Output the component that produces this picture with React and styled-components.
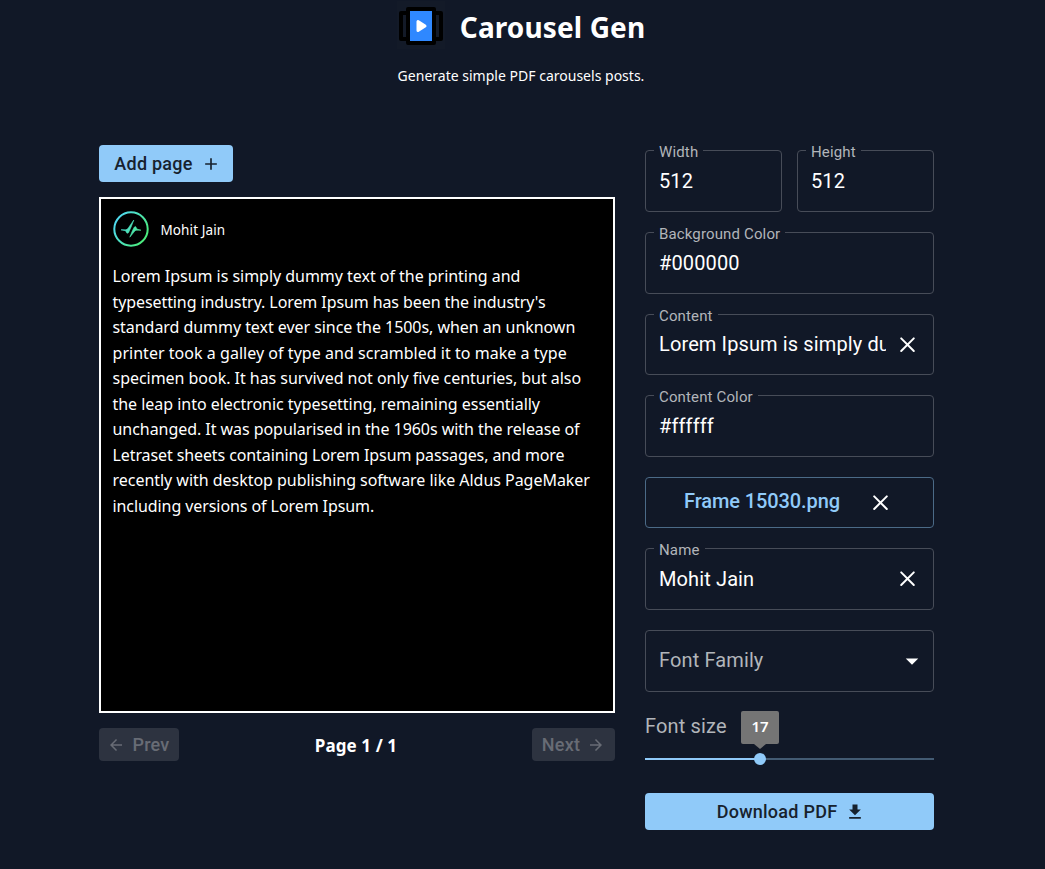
import React from "react";
import styled, { createGlobalStyle } from "styled-components";

const GlobalStyle = createGlobalStyle`
  * { box-sizing: border-box; }
  body { margin: 0; background: #111827; color: #fff; font-family: "Noto Sans", "Open Sans", sans-serif; }
  button { font: inherit; border: 0; cursor: pointer; padding: 0; }
`;

const Page = styled.div`
  height: 869px;
  display: flex;
  flex-direction: column;
  overflow: hidden;
`;

const Header = styled.header`
  display: flex;
  flex-direction: column;
  align-items: center;
  height: 145px;
  flex: none;
`;

const Brand = styled.div`
  display: flex;
  align-items: center;
  gap: 15px;
  height: 50px;
  padding: 1px 3px 1px 0;
  svg { display: block; flex: none; }
`;

const Title = styled.h1`
  margin: 3px 0 0;
  font-size: 28px;
  line-height: 40px;
  font-weight: 700;
  white-space: nowrap;
  letter-spacing: 0.12px;
`;

const Tagline = styled.p`
  margin: 14px 3px 0 0;
  font-size: 14px;
  line-height: 24px;
  letter-spacing: 0.01px;
  white-space: nowrap;
`;

const Main = styled.main`
  display: flex;
  gap: 30px;
  padding-left: 99px;
  align-items: flex-start;
`;

const Preview = styled.section`
  width: 516px;
  display: flex;
  flex-direction: column;
  align-items: flex-start;
`;

const Button = styled.button`
  display: flex;
  align-items: center;
  justify-content: center;
  height: 37px;
  width: ${(p) => p.$width};
  gap: ${(p) => p.$gap || 8}px;
  padding-left: 3px;
  border-radius: 4px;
  background: #90caf9;
  color: #17222e;
  font-family: Roboto, sans-serif;
  font-size: 18px;
  font-weight: 500;
  letter-spacing: 0.25px;
  white-space: nowrap;
  svg { display: block; flex: none; }
`;

const PagerButton = styled(Button)`
  height: 33px;
  padding: 0 ${(p) => p.$right || 0}px 0 0;
  background: #2d3340;
  color: #686c75;
  letter-spacing: 0.2px;
`;

const Canvas = styled.article`
  width: 516px;
  height: 516px;
  margin-top: 15px;
  border: 2px solid #fff;
  background: #000;
  padding: 12px 0 0 12px;
`;

const Author = styled.div`
  display: flex;
  align-items: center;
  gap: 11.5px;
  height: 36px;
  font-size: 13.5px;
  letter-spacing: 0.1px;
  svg { display: block; }
  span { padding-top: 1px; }
`;

const Copy = styled.div`
  margin: 17px 0 0 -0.5px;
  font-size: 16px;
  line-height: 25.5px;
`;

const Line = styled.div`
  white-space: nowrap;
  letter-spacing: ${(p) => p.$track}px;
`;

const Pager = styled.nav`
  width: 100%;
  margin-top: 15px;
  display: flex;
  justify-content: space-between;
  align-items: center;
`;

const PageCount = styled.div`
  font-size: 17px;
  font-weight: 700;
  letter-spacing: 0.1px;
  line-height: 24px;
  padding: 2px 0 0 1px;
`;

const Form = styled.section`
  width: 289px;
  padding-top: 5px;
  display: flex;
  flex-direction: column;
  gap: 20px;
  font-family: Roboto, sans-serif;
`;

const Pair = styled.div`
  display: grid;
  grid-template-columns: 137px 137px;
  gap: 15px;
`;

const Field = styled.label`
  position: relative;
  display: flex;
  align-items: center;
  height: ${(p) => p.$height || 62}px;
  padding: 0 ${(p) => p.$right || 14}px 0 13px;
  border: 1px solid #474c58;
  border-radius: 4px;
`;

const FieldLabel = styled.span`
  position: absolute;
  top: -8px;
  left: 8px;
  padding: 0 5px;
  background: #111827;
  color: #b2b5ba;
  font-size: 15px;
  line-height: 18px;
  letter-spacing: 0.14px;
  white-space: nowrap;
`;

const Value = styled.span`
  flex: 1;
  overflow: hidden;
  white-space: nowrap;
  font-size: 20px;
  line-height: 28px;
  padding-bottom: ${(p) => (p.$muted ? 3 : 1)}px;
  color: ${(p) => (p.$muted ? "#b2b5ba" : "#fff")};
  letter-spacing: 0.12px;
`;

const IconSlot = styled.span`
  display: flex;
  flex: none;
  margin-left: ${(p) => p.$left || 9}px;
  color: #fff;
`;

const FileButton = styled.button`
  display: flex;
  align-items: center;
  height: 51px;
  padding: 0 0 0 38px;
  border: 1px solid #4b6a87;
  border-radius: 4px;
  background: transparent;
  color: #90caf9;
  font-family: Roboto, sans-serif;
  font-size: 20px;
  font-weight: 500;
  letter-spacing: -0.1px;
`;

const FileName = styled.span`
  padding-bottom: 3px;
`;

const FontSize = styled.div`
  height: 61px;
  display: flex;
  flex-direction: column;
`;

const SliderLabel = styled.div`
  font-size: 20px;
  line-height: 28px;
  color: #b2b5ba;
  letter-spacing: 0.15px;
`;

const Track = styled.div`
  position: relative;
  height: 2px;
  margin-top: 18px;
  background: linear-gradient(to right, #90caf9 115px, #435b73 115px);
`;

const Thumb = styled.span`
  position: absolute;
  left: 109px;
  top: -5px;
  width: 12px;
  height: 12px;
  border-radius: 50%;
  background: #90caf9;
`;

const Bubble = styled.span`
  position: absolute;
  left: 96px;
  top: -47px;
  width: 38px;
  height: 33px;
  border-radius: 2px;
  background: #757575;
  color: #fff;
  font-family: "Noto Sans", sans-serif;
  font-size: 15px;
  font-weight: 600;
  line-height: 31px;
  text-align: center;
  &::after {
    content: "";
    position: absolute;
    left: 13px;
    top: 33px;
    border: 6px solid transparent;
    border-top: 5px solid #757575;
    border-bottom: 0;
  }
`;

const Logo = () => (
  <svg width="48" height="48" viewBox="0 0 48 48">
    <rect width="48" height="48" fill="#131a28" />
    <path d="M9 12H4v26h5M39 12h5v26h-5" fill="none" stroke="#000" strokeWidth="4" strokeLinejoin="round" />
    <rect x="11" y="8" width="26" height="34" fill="#2f88ff" stroke="#000" strokeWidth="4" strokeLinejoin="round" />
    <path d="M21 20.5v9l7-4.5z" fill="#fff" stroke="#fff" strokeWidth="3" strokeLinejoin="round" />
  </svg>
);

const Avatar = () => (
  <svg width="36" height="36" viewBox="0 0 36 36">
    <defs>
      <linearGradient id="ring" gradientUnits="userSpaceOnUse" x1="3" y1="8" x2="33" y2="26">
        <stop offset="0" stopColor="#4fd8f0" />
        <stop offset="1" stopColor="#4bec7c" />
      </linearGradient>
    </defs>
    <circle cx="18" cy="18" r="16.7" fill="none" stroke="url(#ring)" strokeWidth="2" />
    <path d="M8 18.8h4.8q1.8-.2 2.8-2.2L20.8 9l-2.7 7-2.6 5.7-1.5.6-1.5-2.6zM28 19.2h-4.4q-1.6 0-2.6 1.8L16.8 26.2l2.6-6.4 1.8-3.6 1.4-.6 1.4 2.5z" fill="url(#ring)" stroke="url(#ring)" strokeWidth=".6" strokeLinejoin="round" />
  </svg>
);

const paths = {
  plus: "M19 13h-6v6h-2v-6H5v-2h6V5h2v6h6v2z",
  left: "M20 11H7.83l5.59-5.59L12 4l-8 8 8 8 1.41-1.41L7.83 13H20v-2z",
  right: "M12 4l-1.41 1.41L16.17 11H4v2h12.17l-5.58 5.59L12 20l8-8z",
  down: "M7 10l5 5 5-5z",
  download: "M19 9h-4V3H9v6H5l7 7 7-7zM5 18v2h14v-2H5z",
};

const Icon = ({ name, size = 24 }) => (
  <svg width={size} height={size} viewBox="0 0 24 24" fill="currentColor">
    <path d={paths[name]} />
  </svg>
);

const CloseIcon = () => (
  <svg width="24" height="24" viewBox="0 0 24 24" fill="none" stroke="currentColor" strokeWidth="2" strokeLinecap="round">
    <path d="M6.2 5.4l12.6 12.6M18.8 5.4L6.2 18" />
  </svg>
);

const lines = [
  ["Lorem Ipsum is simply dummy text of the printing and", -0.03],
  ["typesetting industry. Lorem Ipsum has been the industry's", -0.09],
  ["standard dummy text ever since the 1500s, when an unknown", -0.05],
  ["printer took a galley of type and scrambled it to make a type", 0.035],
  ["specimen book. It has survived not only five centuries, but also", -0.035],
  ["the leap into electronic typesetting, remaining essentially", -0.03],
  ["unchanged. It was popularised in the 1960s with the release of", -0.05],
  ["Letraset sheets containing Lorem Ipsum passages, and more", -0.1],
  ["recently with desktop publishing software like Aldus PageMaker", -0.03],
  ["including versions of Lorem Ipsum.", -0.08],
];

const TextField = ({ label, value, clearable, height }) => (
  <Field $height={height}>
    <FieldLabel>{label}</FieldLabel>
    <Value>{value}</Value>
    {clearable && <IconSlot><CloseIcon /></IconSlot>}
  </Field>
);

export default function App() {
  return (
    <Page>
      <GlobalStyle />
      <Header>
        <Brand>
          <Logo />
          <Title>Carousel Gen</Title>
        </Brand>
        <Tagline>Generate simple PDF carousels posts.</Tagline>
      </Header>
      <Main>
        <Preview>
          <Button $width="134px">Add page<Icon name="plus" size={20} /></Button>
          <Canvas>
            <Author><Avatar /><span>Mohit Jain</span></Author>
            <Copy>
              {lines.map(([text, track]) => <Line key={text} $track={track}>{text}</Line>)}
            </Copy>
          </Canvas>
          <Pager>
            <PagerButton disabled $width="80px" $right={2}><Icon name="left" size={18} />Prev</PagerButton>
            <PageCount>Page 1 / 1</PageCount>
            <PagerButton disabled $width="83px" $gap={7}><span>Next</span><Icon name="right" size={18} /></PagerButton>
          </Pager>
        </Preview>
        <Form>
          <Pair>
            <TextField label="Width" value="512" />
            <TextField label="Height" value="512" />
          </Pair>
          <TextField label="Background Color" value="#000000" />
          <TextField label="Content" value="Lorem Ipsum is simply dummy text" clearable height={61} />
          <TextField label="Content Color" value="#ffffff" />
          <FileButton><FileName>Frame 15030.png</FileName><IconSlot $left={28}><CloseIcon /></IconSlot></FileButton>
          <TextField label="Name" value="Mohit Jain" clearable />
          <Field as="div" $right={6}>
            <Value $muted>Font Family</Value>
            <IconSlot><Icon name="down" size={30} /></IconSlot>
          </Field>
          <FontSize>
            <SliderLabel>Font size</SliderLabel>
            <Track><Bubble>17</Bubble><Thumb /></Track>
          </FontSize>
          <Button $width="100%">Download PDF<Icon name="download" size={20} /></Button>
        </Form>
      </Main>
    </Page>
  );
}
